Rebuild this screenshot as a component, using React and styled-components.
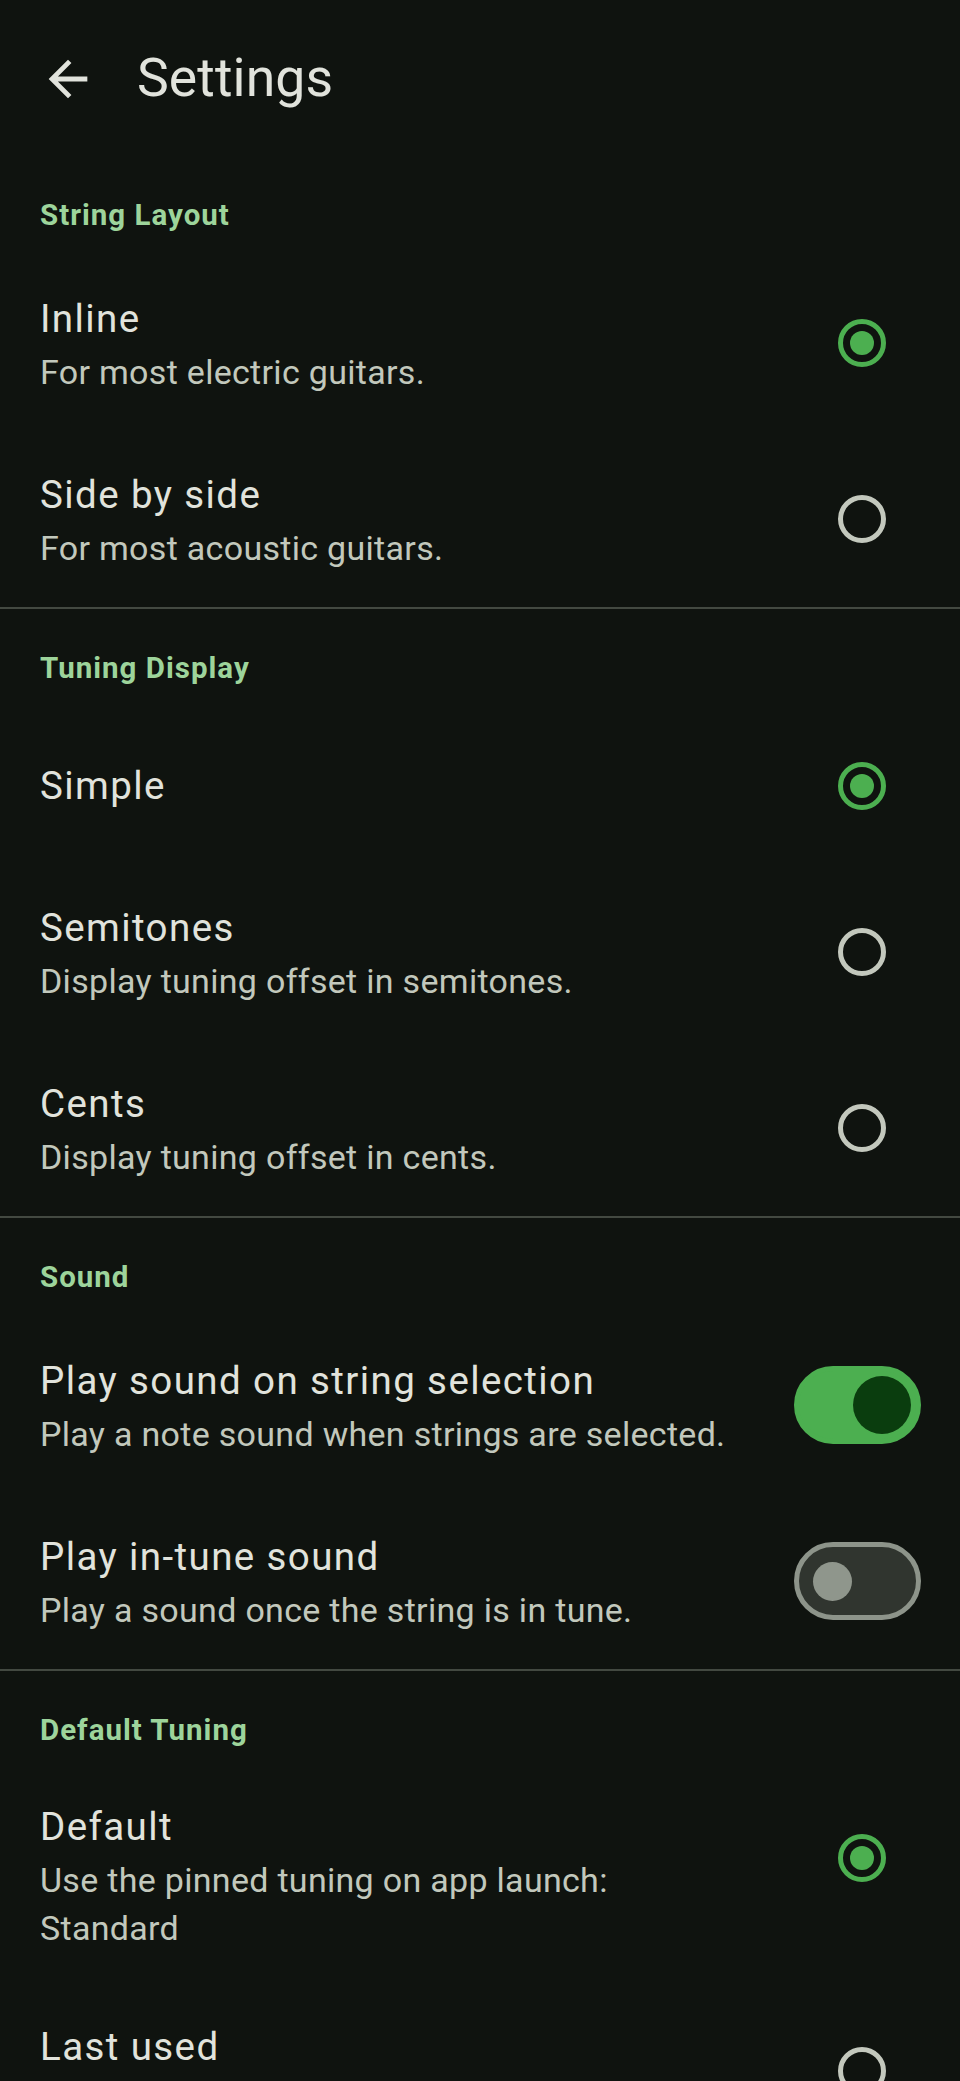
import React from 'react';
import styled, { createGlobalStyle } from 'styled-components';

const sections = [
  {
    title: 'String Layout',
    items: [
      { type: 'radio', title: 'Inline', sub: ['For most electric guitars.'], checked: true },
      { type: 'radio', title: 'Side by side', sub: ['For most acoustic guitars.'] }
    ]
  },
  {
    title: 'Tuning Display',
    items: [
      { type: 'radio', title: 'Simple', sub: [], checked: true },
      { type: 'radio', title: 'Semitones', sub: ['Display tuning offset in semitones.'] },
      { type: 'radio', title: 'Cents', sub: ['Display tuning offset in cents.'] }
    ]
  },
  {
    title: 'Sound',
    items: [
      {
        type: 'switch',
        title: 'Play sound on string selection',
        sub: ['Play a note sound when strings are selected.'],
        checked: true
      },
      { type: 'switch', title: 'Play in-tune sound', sub: ['Play a sound once the string is in tune.'] }
    ]
  },
  {
    title: 'Default Tuning',
    items: [
      {
        type: 'radio',
        title: 'Default',
        sub: ['Use the pinned tuning on app launch:', 'Standard'],
        checked: true
      },
      { type: 'radio', title: 'Last used', sub: ['Use the last used tuning on app launch.'] }
    ]
  }
];

const Settings = () => (
  <Page>
    <GlobalStyle />
    <AppBar>
      <BackButton aria-label="Back">
        <svg width="58" height="58" viewBox="0 0 24 24">
          <path
            fill="#e1e3dc"
            d="M20 11H7.83l5.59-5.59L12 4l-8 8 8 8 1.41-1.41L7.83 13H20v-2z"
          />
        </svg>
      </BackButton>
      <AppTitle>Settings</AppTitle>
    </AppBar>
    {sections.map((section, i) => (
      <Section key={section.title} $divider={i > 0}>
        <SectionHeader $divider={i > 0}>{section.title}</SectionHeader>
        {section.items.map((item) => (
          <Item key={item.title} $lines={1 + item.sub.length}>
            <TextCol>
              <ItemTitle>{item.title}</ItemTitle>
              {item.sub.map((line) => (
                <ItemSub key={line}>{line}</ItemSub>
              ))}
            </TextCol>
            {item.type === 'radio' ? (
              <Radio $checked={item.checked} $top={item.sub.length > 1}>
                {item.checked && <RadioDot />}
              </Radio>
            ) : (
              <SwitchTrack $checked={item.checked}>
                <SwitchThumb $checked={item.checked} />
              </SwitchTrack>
            )}
          </Item>
        ))}
      </Section>
    ))}
  </Page>
);

export default Settings;

const GlobalStyle = createGlobalStyle`
  html, body {
    margin: 0;
    padding: 0;
    background: #0f130f;
  }
  body {
    font-family: Roboto, "Noto Sans", sans-serif;
  }
`;

const Page = styled.div`
  width: 960px;
  min-height: 2081px;
  background: #0f130f;
  overflow: hidden;
`;

const AppBar = styled.header`
  height: 155px;
  display: flex;
  align-items: center;
  padding-left: 39px;
`;

const BackButton = styled.div`
  width: 58px;
  height: 58px;
  display: flex;
  align-items: center;
  justify-content: center;
  margin-right: 40px;
  margin-top: 2px;
`;

const AppTitle = styled.h1`
  margin: 0;
  font-size: 53.5px;
  font-weight: 400;
  color: #e1e3dc;
  letter-spacing: 0.1px;
`;

const Section = styled.section`
  border-top: ${(p) => (p.$divider ? '2px solid #434941' : 'none')};
`;

const SectionHeader = styled.div`
  height: ${(p) => (p.$divider ? 99 : 100)}px;
  box-sizing: border-box;
  padding: ${(p) => (p.$divider ? 39 : 40)}px 40px 0;
  line-height: 40px;
  font-size: 29.5px;
  font-weight: 700;
  letter-spacing: 1px;
  color: #9dd49b;
`;

const Item = styled.div`
  display: flex;
  align-items: ${(p) => (p.$lines > 2 ? 'flex-start' : 'center')};
  justify-content: space-between;
  box-sizing: border-box;
  height: ${(p) => (p.$lines === 1 ? 156 : p.$lines === 2 ? 176 : 213)}px;
  padding: ${(p) => (p.$lines > 2 ? '28px' : '0')} 40px 0 40px;
`;

const TextCol = styled.div`
  display: flex;
  flex-direction: column;
  min-width: 0;
`;

const ItemTitle = styled.div`
  font-size: 38.5px;
  line-height: 58px;
  letter-spacing: 1.4px;
  color: #e1e3dc;
  white-space: nowrap;
`;

const ItemSub = styled.div`
  font-size: 34px;
  line-height: 48px;
  letter-spacing: 0.3px;
  color: #c2c8bc;
  white-space: nowrap;
`;

const Radio = styled.div`
  flex: none;
  width: 48px;
  height: 48px;
  box-sizing: border-box;
  border-radius: 50%;
  border: 5px solid ${(p) => (p.$checked ? '#4caf50' : '#c3c8bd')};
  display: flex;
  align-items: center;
  justify-content: center;
  margin-right: 34px;
  margin-top: ${(p) => (p.$top ? '36px' : '0')};
`;

const RadioDot = styled.div`
  width: 24px;
  height: 24px;
  border-radius: 50%;
  background: #4caf50;
`;

const SwitchTrack = styled.div`
  flex: none;
  width: 127px;
  height: 78px;
  box-sizing: border-box;
  border-radius: 39px;
  display: flex;
  align-items: center;
  background: ${(p) => (p.$checked ? '#4caf50' : '#30352f')};
  border: 5px solid ${(p) => (p.$checked ? '#4caf50' : '#8d948a')};
  padding: 0 ${(p) => (p.$checked ? '5px' : '14px')};
  justify-content: ${(p) => (p.$checked ? 'flex-end' : 'flex-start')};
  margin-right: -1px;
`;

const SwitchThumb = styled.div`
  width: ${(p) => (p.$checked ? 58 : 39)}px;
  height: ${(p) => (p.$checked ? 58 : 39)}px;
  border-radius: 50%;
  background: ${(p) => (p.$checked ? '#0a3d0e' : '#8f968c')};
`;
